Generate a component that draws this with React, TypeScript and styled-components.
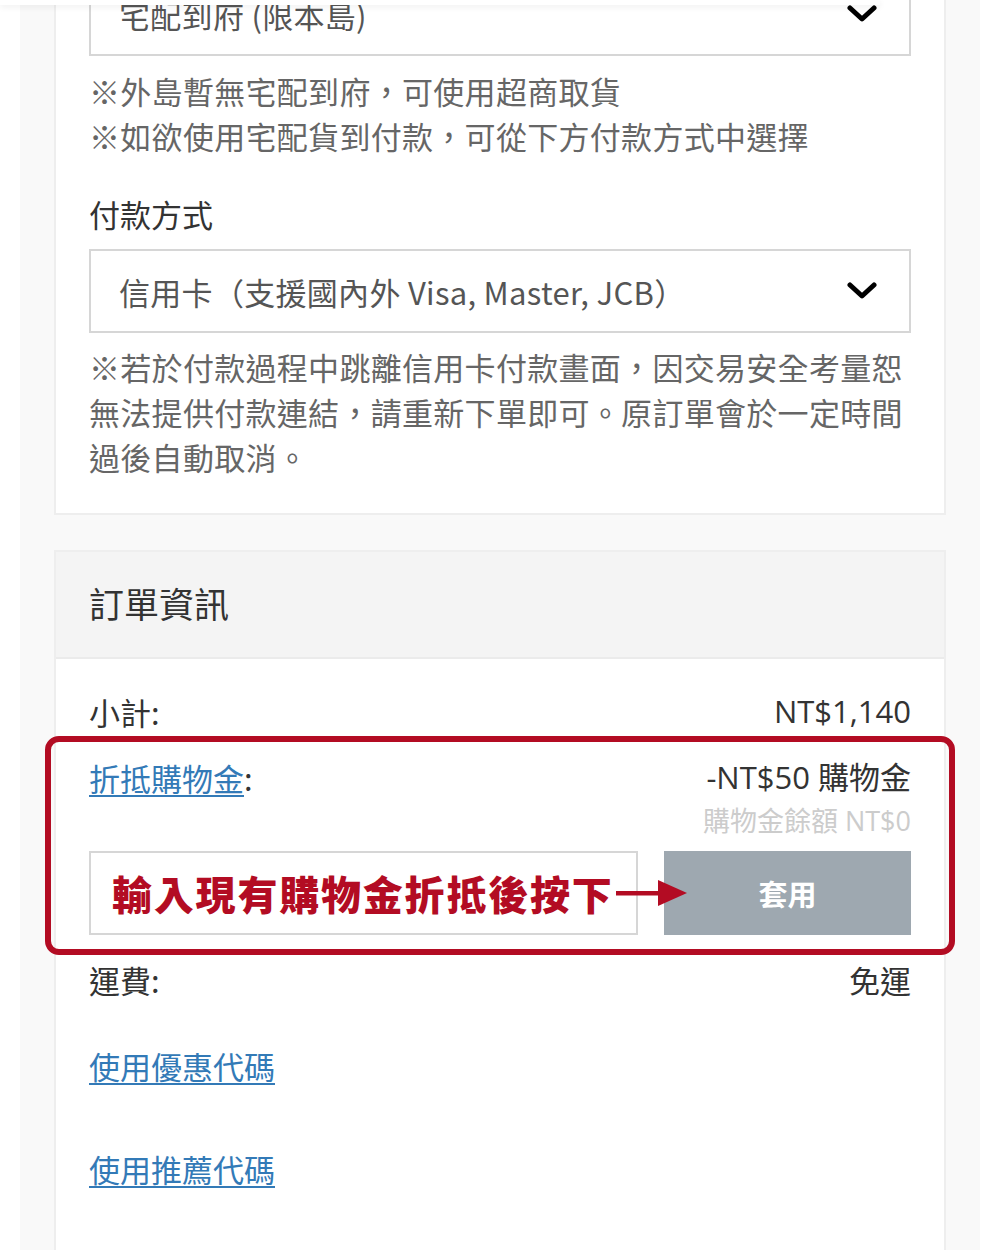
import React from "react";
import styled, { createGlobalStyle } from "styled-components";

const GlobalStyle = createGlobalStyle`
  html, body { margin: 0; padding: 0; background: #ffffff; overflow: hidden; }
  body { font-family: "Open Sans", "Noto Sans CJK TC", sans-serif; color: #333; }
  * { box-sizing: border-box; }
`;

const Page = styled.div`
  padding: 0 20px;
  height: 1250px;
  overflow: hidden;
  position: relative;
`;

const TopShade = styled.div`
  position: absolute;
  top: 0;
  left: 0;
  width: 880px;
  height: 5px;
  background: #ffffff;
  box-shadow: 0 2px 6px rgba(0, 0, 0, 0.07);
  z-index: 5;
`;

const Column = styled.div`
  background: #f9f9f9;
  padding: 0 34px;
  min-height: 1300px;
  display: flex;
  flex-direction: column;
  gap: 35px;
`;

const Card = styled.section`
  background: #ffffff;
  border: 2px solid #eeeeee;
  border-top: none;
`;

const CardBody = styled.div<{ $pb?: number }>`
  padding: 0 33px ${(p) => p.$pb ?? 34}px;
  display: flex;
  flex-direction: column;
`;

const SelectBox = styled.div<{ $mt?: number }>`
  margin-top: ${(p) => p.$mt ?? 0}px;
  height: 84px;
  border: 2px solid #d6d6d6;
  display: flex;
  align-items: center;
  justify-content: space-between;
  padding: 0 32px 0 28px;
  font-family: "Noto Sans CJK TC", sans-serif;
  font-size: 31px;
  letter-spacing: 0.3px;
  color: #555;
  background: #fff;
`;

const Notes = styled.div<{ $mt?: number }>`
  margin-top: ${(p) => p.$mt ?? 0}px;
  font-family: "Noto Sans CJK TC", sans-serif;
  font-size: 31px;
  letter-spacing: 0.3px;
  line-height: 45px;
  color: #666;
`;

const Label = styled.div<{ $mt?: number }>`
  margin-top: ${(p) => p.$mt ?? 0}px;
  font-family: "Noto Sans CJK TC", sans-serif;
  font-size: 31px;
  line-height: 45px;
  color: #333;
`;

const OrderCard = styled.section`
  background: #ffffff;
  border: 2px solid #eeeeee;
  border-bottom: none;
  flex: 1;
`;

const OrderHeader = styled.div`
  height: 107px;
  background: #f4f4f4;
  border-bottom: 2px solid #ebebeb;
  display: flex;
  align-items: center;
  padding: 0 33px 4px;
  font-family: "Noto Sans CJK TC", sans-serif;
  font-size: 35px;
  color: #333;
`;

const OrderBody = styled.div`
  padding: 30px 33px 0;
  display: flex;
  flex-direction: column;
`;

const Row = styled.div<{ $mt?: number }>`
  margin-top: ${(p) => p.$mt ?? 0}px;
  display: flex;
  justify-content: space-between;
  align-items: center;
  line-height: 45px;
  font-size: 31px;
  color: #333;
`;

const RowLabel = styled.span`
  font-family: "Noto Sans CJK TC", sans-serif;
`;

const Amount = styled.span`
  font-family: "Open Sans", "Noto Sans CJK TC", sans-serif;
  font-size: 31px;
`;

const LinkText = styled.a`
  color: #337ab7;
  text-decoration: underline;
  text-underline-offset: 4px;
  text-decoration-thickness: 2px;
  font-family: "Noto Sans CJK TC", sans-serif;
  font-size: 31px;
  cursor: pointer;
`;

const Highlight = styled.div`
  margin: 2px -44px 0;
  border: 6px solid #b30c23;
  border-radius: 14px;
  padding: 13px 38px 14px;
  display: flex;
  flex-direction: column;
`;

const Balance = styled.div`
  text-align: right;
  font-family: "Open Sans", "Noto Sans CJK TC", sans-serif;
  font-size: 27px;
  line-height: 36px;
  color: #cccccc;
  margin-top: 3px;
`;

const InputRow = styled.div`
  margin-top: 12px;
  display: flex;
  gap: 26px;
  height: 84px;
  position: relative;
`;

const Input = styled.div`
  flex: 0 0 549px;
  border: 2px solid #d6d6d6;
  background: #fff;
`;

const ApplyButton = styled.button`
  flex: 1;
  border: none;
  background: #9ea8b0;
  color: #ffffff;
  font-family: "Noto Sans CJK TC", sans-serif;
  font-weight: 700;
  font-size: 29px;
  cursor: pointer;
`;

const Annotation = styled.div`
  position: absolute;
  left: 23px;
  top: 0;
  height: 84px;
  display: flex;
  align-items: center;
  pointer-events: none;
`;

const AnnotationText = styled.span`
  font-family: "Noto Sans CJK TC", sans-serif;
  font-weight: 900;
  font-size: 40px;
  letter-spacing: 1.8px;
  color: #b30c23;
  white-space: nowrap;
`;

const Chevron = () => (
  <svg width="30" height="20" viewBox="0 0 30 20">
    <polyline points="3,4 15,15 27,4" fill="none" stroke="#000" strokeWidth="5" strokeLinecap="round" strokeLinejoin="round" />
  </svg>
);

const Arrow = () => (
  <svg width="72" height="28" viewBox="0 0 72 28" style={{ marginLeft: 2 }}>
    <rect x="0" y="12" width="46" height="4.5" fill="#b30c23" />
    <polygon points="42,1 71,14 42,27" fill="#b30c23" />
  </svg>
);

export default function App() {
  return (
    <>
      <GlobalStyle />
      <Page>
        <TopShade />
        <Column>
          <Card>
            <CardBody>
              <SelectBox $mt={-28}>
                <span>宅配到府 (限本島)</span>
                <Chevron />
              </SelectBox>
              <Notes $mt={12}>
                ※外島暫無宅配到府，可使用超商取貨
                <br />
                ※如欲使用宅配貨到付款，可從下方付款方式中選擇
              </Notes>
              <Label $mt={33}>付款方式</Label>
              <SelectBox $mt={13}>
                <span>信用卡（支援國內外 Visa, Master, JCB）</span>
                <Chevron />
              </SelectBox>
              <Notes $mt={11}>
                ※若於付款過程中跳離信用卡付款畫面，因交易安全考量恕無法提供付款連結，請重新下單即可。原訂單會於一定時間過後自動取消。
              </Notes>
            </CardBody>
          </Card>
          <OrderCard>
            <OrderHeader>訂單資訊</OrderHeader>
            <OrderBody>
              <Row>
                <RowLabel>小計:</RowLabel>
                <Amount>NT$1,140</Amount>
              </Row>
              <Highlight>
                <Row>
                  <RowLabel>
                    <LinkText>折抵購物金</LinkText>:
                  </RowLabel>
                  <Amount>-NT$50 購物金</Amount>
                </Row>
                <Balance>購物金餘額 NT$0</Balance>
                <InputRow>
                  <Input />
                  <ApplyButton>套用</ApplyButton>
                  <Annotation>
                    <AnnotationText>輸入現有購物金折抵後按下</AnnotationText>
                    <Arrow />
                  </Annotation>
                </InputRow>
              </Highlight>
              <Row $mt={2}>
                <RowLabel>運費:</RowLabel>
                <RowLabel>免運</RowLabel>
              </Row>
              <Row $mt={41}>
                <LinkText>使用優惠代碼</LinkText>
              </Row>
              <Row $mt={58}>
                <LinkText>使用推薦代碼</LinkText>
              </Row>
            </OrderBody>
          </OrderCard>
        </Column>
      </Page>
    </>
  );
}
